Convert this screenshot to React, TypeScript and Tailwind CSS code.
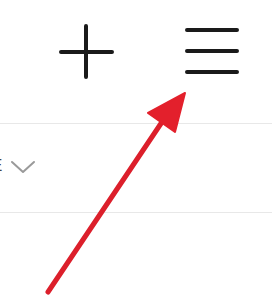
export default function App() {
  return (
    <div className="relative h-[300px] w-[272px] overflow-hidden bg-white">
      <div className="flex h-[124px] items-start border-b border-[#e8e8e8] pl-[58px] pt-[23px]">
        <svg width="56" height="56" viewBox="0 0 56 56" fill="none" stroke="#1a1a1a" strokeWidth="4" strokeLinecap="round">
          <path d="M28 3v51M3 29h51" />
        </svg>
        <svg className="ml-[69px]" width="56" height="56" viewBox="0 0 56 56" fill="none" stroke="#1a1a1a" strokeWidth="4" strokeLinecap="round">
          <path d="M4 7h50M4 28h50M4 49h50" />
        </svg>
      </div>
      <div className="flex h-[89px] items-center border-b border-[#e8e8e8] pb-[4px]">
        <span className="-ml-[9px] font-['Liberation_Sans',sans-serif] text-[17px] text-[#444]">E</span>
        <svg className="ml-[8px] mt-[1px]" width="26" height="14" viewBox="0 0 26 14" fill="none" stroke="#9a9a9a" strokeWidth="2" strokeLinecap="round" strokeLinejoin="round">
          <path d="M2 2l11 10L24 2" />
        </svg>
      </div>
      <svg className="absolute left-0 top-0" width="272" height="300" viewBox="0 0 272 300" fill="none">
        <path d="M48 292L166 116" stroke="#dc1f2b" strokeWidth="5" strokeLinecap="round" />
        <path d="M185 93L148 113L175 132Z" fill="#e3202c" stroke="#e3202c" strokeWidth="2" strokeLinejoin="round" />
      </svg>
    </div>
  );
}
